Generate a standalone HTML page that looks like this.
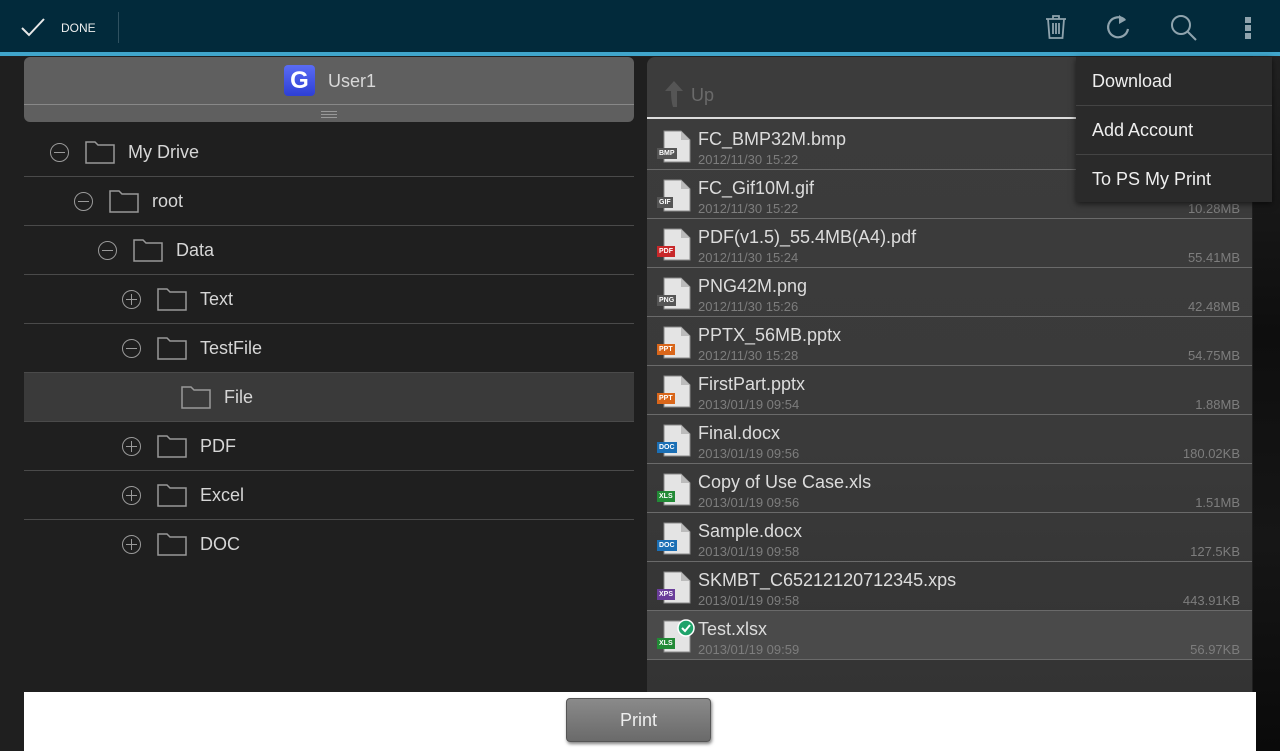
<!DOCTYPE html>
<html><head><meta charset="utf-8"><style>
*{margin:0;padding:0;box-sizing:border-box}
body{width:1280px;height:751px;overflow:hidden;background:#1f1f1f;font-family:"Liberation Sans",sans-serif;position:relative}
.a{position:absolute}
#top{left:0;top:0;width:1280px;height:52px;background:#022a3b}
#line{left:0;top:52px;width:1280px;height:4px;background:#40a6cc}
#rstrip{left:1253px;top:56px;width:27px;height:695px;background:linear-gradient(#222,#0e0e0e 40%,#161616 70%,#0a0a0a)}
.tr{position:absolute;left:24px;width:610px;height:49px;border-bottom:1px solid #4a4a4a;color:#d6d6d6;font-size:18px}
.tr span{position:absolute;top:14px}
.ci{position:absolute;top:15px;width:19px;height:19px;border:1.5px solid #9a9a9a;border-radius:50%}
.ci:before{content:"";position:absolute;left:3px;right:3px;top:7.5px;height:1.5px;background:#9a9a9a}
.ci.p:after{content:"";position:absolute;top:3px;bottom:3px;left:7.5px;width:1.5px;background:#9a9a9a}
.fo{position:absolute;top:12px}
#rp{left:647px;top:57px;width:605px;height:635px;background:linear-gradient(#3c3c3c,#3a3a3a 60%,#333 100%);border-radius:8px 8px 0 0}
.fr{position:absolute;left:0;width:605px;height:49px;border-bottom:1px solid #6a6a6a}
.fr .n{position:absolute;left:51px;top:8px;font-size:18px;color:#dcdcdc}
.fr .d{position:absolute;left:51px;top:31px;font-size:13px;color:#7d7d7d}
.fr .s{position:absolute;right:12px;top:31px;font-size:13px;color:#7d7d7d}
.ic{position:absolute;left:13px;top:9px;width:32px;height:33px}
.bd{position:absolute;left:10px;top:27px;height:11px;padding:0 2px;font-size:7px;font-weight:bold;color:#fff;line-height:11px}
#menu{left:1076px;top:57px;width:196px;height:145px;background:#2a2a2a;box-shadow:0 2px 6px rgba(0,0,0,.6)}
#menu div{height:49px;border-bottom:1px solid #444;color:#eee;font-size:18px;padding:14px 16px}
#menu div:last-child{border:none}
</style></head><body>
<div class="a" id="top"></div>
<div class="a" id="line"></div>
<svg class="a" style="left:20px;top:17px" width="26" height="22"><path d="M2 11 L9 18 L24 2" stroke="#e8e8e8" stroke-width="2" fill="none"/></svg>
<div class="a" style="left:61px;top:21px;color:#eee;font-size:12px">DONE</div>
<div class="a" style="left:118px;top:12px;width:1px;height:31px;background:#2f5160"></div>
<svg class="a" style="left:1043px;top:14px" width="26" height="26" fill="none" stroke="#8fa3ad" stroke-width="1.8"><path d="M3 5H23M10 5V2H16V5M5 5L6.5 24H19.5L21 5M10 9V20M13 9V20M16 9V20"/></svg>
<svg class="a" style="left:1105px;top:13px" width="28" height="28" fill="none" stroke="#8fa3ad" stroke-width="2.2"><path d="M20 7A10 10 0 1 0 23 16"/><path d="M14 2L21 7L14 11Z" fill="#8fa3ad" stroke="none"/></svg>
<svg class="a" style="left:1169px;top:13px" width="30" height="30" fill="none" stroke="#8fa3ad" stroke-width="2"><circle cx="12" cy="12" r="9"/><path d="M18.5 18.5L27 27"/></svg>
<div class="a" style="left:1245px;top:17px;width:6px;height:6px;background:#8fa3ad;box-shadow:0 8px 0 #8fa3ad,0 16px 0 #8fa3ad"></div>
<div class="a" id="rstrip"></div>

<div class="a" style="left:24px;top:57px;width:610px;height:65px;background:#5f5f5f;border-radius:6px">
 <div class="a" style="left:260px;top:8px;width:31px;height:31px;border-radius:4px;background:linear-gradient(#5a6cf5,#2d3fd6);color:#fff;font-weight:bold;font-size:24px;text-align:center;line-height:31px">G</div>
 <div class="a" style="left:304px;top:14px;font-size:18px;color:#d8d8d8">User1</div>
 <div class="a" style="left:0;top:47px;width:610px;height:1px;background:#888"></div>
 <div class="a" style="left:297px;top:54px;width:16px;height:1px;background:#999;box-shadow:0 3px 0 #999,0 6px 0 #999"></div>
</div>

<div class="tr" style="top:128px"><div class="ci" style="left:26px"></div><svg class="fo" style="left:61px" width="30" height="24" fill="none" stroke="#999" stroke-width="1.5"><path d="M1 23V2H10L13 5H29V23Z"/></svg><span style="left:104px">My Drive</span></div>
<div class="tr" style="top:177px"><div class="ci" style="left:50px"></div><svg class="fo" style="left:85px" width="30" height="24" fill="none" stroke="#999" stroke-width="1.5"><path d="M1 23V2H10L13 5H29V23Z"/></svg><span style="left:128px">root</span></div>
<div class="tr" style="top:226px"><div class="ci" style="left:74px"></div><svg class="fo" style="left:109px" width="30" height="24" fill="none" stroke="#999" stroke-width="1.5"><path d="M1 23V2H10L13 5H29V23Z"/></svg><span style="left:152px">Data</span></div>
<div class="tr" style="top:275px"><div class="ci p" style="left:98px"></div><svg class="fo" style="left:133px" width="30" height="24" fill="none" stroke="#999" stroke-width="1.5"><path d="M1 23V2H10L13 5H29V23Z"/></svg><span style="left:176px">Text</span></div>
<div class="tr" style="top:324px"><div class="ci" style="left:98px"></div><svg class="fo" style="left:133px" width="30" height="24" fill="none" stroke="#999" stroke-width="1.5"><path d="M1 23V2H10L13 5H29V23Z"/></svg><span style="left:176px">TestFile</span></div>
<div class="tr" style="top:373px;background:#3a3a3a"><svg class="fo" style="left:157px" width="30" height="24" fill="none" stroke="#999" stroke-width="1.5"><path d="M1 23V2H10L13 5H29V23Z"/></svg><span style="left:200px">File</span></div>
<div class="tr" style="top:422px"><div class="ci p" style="left:98px"></div><svg class="fo" style="left:133px" width="30" height="24" fill="none" stroke="#999" stroke-width="1.5"><path d="M1 23V2H10L13 5H29V23Z"/></svg><span style="left:176px">PDF</span></div>
<div class="tr" style="top:471px"><div class="ci p" style="left:98px"></div><svg class="fo" style="left:133px" width="30" height="24" fill="none" stroke="#999" stroke-width="1.5"><path d="M1 23V2H10L13 5H29V23Z"/></svg><span style="left:176px">Excel</span></div>
<div class="tr" style="top:520px;border:none"><div class="ci p" style="left:98px"></div><svg class="fo" style="left:133px" width="30" height="24" fill="none" stroke="#999" stroke-width="1.5"><path d="M1 23V2H10L13 5H29V23Z"/></svg><span style="left:176px">DOC</span></div>

<div class="a" id="rp">
 <svg class="a" style="left:18px;top:24px" width="18" height="26"><path d="M9 0L18 10H12V26H8Q6 20 6 10H0Z" fill="#555"/></svg>
 <div class="a" style="left:44px;top:28px;font-size:18px;color:#6a6a6a">Up</div>
 <div class="a" style="left:0;top:60px;width:430px;height:2px;background:#ddd"></div>
 <div class="fr" style="top:64px"><svg class="ic" viewBox="0 0 32 33"><path d="M4 1H21L30 10V32H4Z" fill="#e4e4e4" stroke="#888"/><path d="M21 1V10H30" fill="#bbb"/></svg><div class="bd" style="background:#555">BMP</div><div class="n">FC_BMP32M.bmp</div><div class="d">2012/11/30 15:22</div></div>
 <div class="fr" style="top:113px"><svg class="ic" viewBox="0 0 32 33"><path d="M4 1H21L30 10V32H4Z" fill="#e4e4e4" stroke="#888"/><path d="M21 1V10H30" fill="#bbb"/></svg><div class="bd" style="background:#555">GIF</div><div class="n">FC_Gif10M.gif</div><div class="d">2012/11/30 15:22</div><div class="s">10.28MB</div></div>
 <div class="fr" style="top:162px"><svg class="ic" viewBox="0 0 32 33"><path d="M4 1H21L30 10V32H4Z" fill="#e4e4e4" stroke="#888"/><path d="M21 1V10H30" fill="#bbb"/></svg><div class="bd" style="background:#c8282a">PDF</div><div class="n">PDF(v1.5)_55.4MB(A4).pdf</div><div class="d">2012/11/30 15:24</div><div class="s">55.41MB</div></div>
 <div class="fr" style="top:211px"><svg class="ic" viewBox="0 0 32 33"><path d="M4 1H21L30 10V32H4Z" fill="#e4e4e4" stroke="#888"/><path d="M21 1V10H30" fill="#bbb"/></svg><div class="bd" style="background:#555">PNG</div><div class="n">PNG42M.png</div><div class="d">2012/11/30 15:26</div><div class="s">42.48MB</div></div>
 <div class="fr" style="top:260px"><svg class="ic" viewBox="0 0 32 33"><path d="M4 1H21L30 10V32H4Z" fill="#e4e4e4" stroke="#888"/><path d="M21 1V10H30" fill="#bbb"/></svg><div class="bd" style="background:#d9661a">PPT</div><div class="n">PPTX_56MB.pptx</div><div class="d">2012/11/30 15:28</div><div class="s">54.75MB</div></div>
 <div class="fr" style="top:309px"><svg class="ic" viewBox="0 0 32 33"><path d="M4 1H21L30 10V32H4Z" fill="#e4e4e4" stroke="#888"/><path d="M21 1V10H30" fill="#bbb"/></svg><div class="bd" style="background:#d9661a">PPT</div><div class="n">FirstPart.pptx</div><div class="d">2013/01/19 09:54</div><div class="s">1.88MB</div></div>
 <div class="fr" style="top:358px"><svg class="ic" viewBox="0 0 32 33"><path d="M4 1H21L30 10V32H4Z" fill="#e4e4e4" stroke="#888"/><path d="M21 1V10H30" fill="#bbb"/></svg><div class="bd" style="background:#1b6fb5">DOC</div><div class="n">Final.docx</div><div class="d">2013/01/19 09:56</div><div class="s">180.02KB</div></div>
 <div class="fr" style="top:407px"><svg class="ic" viewBox="0 0 32 33"><path d="M4 1H21L30 10V32H4Z" fill="#e4e4e4" stroke="#888"/><path d="M21 1V10H30" fill="#bbb"/></svg><div class="bd" style="background:#228a36">XLS</div><div class="n">Copy of Use Case.xls</div><div class="d">2013/01/19 09:56</div><div class="s">1.51MB</div></div>
 <div class="fr" style="top:456px"><svg class="ic" viewBox="0 0 32 33"><path d="M4 1H21L30 10V32H4Z" fill="#e4e4e4" stroke="#888"/><path d="M21 1V10H30" fill="#bbb"/></svg><div class="bd" style="background:#1b6fb5">DOC</div><div class="n">Sample.docx</div><div class="d">2013/01/19 09:58</div><div class="s">127.5KB</div></div>
 <div class="fr" style="top:505px"><svg class="ic" viewBox="0 0 32 33"><path d="M4 1H21L30 10V32H4Z" fill="#e4e4e4" stroke="#888"/><path d="M21 1V10H30" fill="#bbb"/></svg><div class="bd" style="background:#6a3d9a">XPS</div><div class="n">SKMBT_C65212120712345.xps</div><div class="d">2013/01/19 09:58</div><div class="s">443.91KB</div></div>
 <div class="fr" style="top:554px;background:#4a4a4a"><svg class="ic" viewBox="0 0 32 33"><path d="M4 1H21L30 10V32H4Z" fill="#e4e4e4" stroke="#888"/><path d="M21 1V10H30" fill="#bbb"/></svg><div class="bd" style="background:#228a36">XLS</div><svg class="a" style="left:30px;top:8px" width="18" height="18"><circle cx="9" cy="9" r="8" fill="#1fa36a" stroke="#fff" stroke-width="1.5"/><path d="M5 9L8 12L13 6" stroke="#fff" stroke-width="2" fill="none"/></svg><div class="n">Test.xlsx</div><div class="d">2013/01/19 09:59</div><div class="s">56.97KB</div></div>
</div>

<div class="a" id="menu"><div>Download</div><div>Add Account</div><div>To PS My Print</div></div>

<div class="a" style="left:24px;top:692px;width:1232px;height:59px;background:#fff"></div>
<div class="a" style="left:566px;top:698px;width:145px;height:44px;border-radius:4px;background:linear-gradient(#8a8a8a,#6a6a6a);border:1px solid #555;box-shadow:1px 2px 3px rgba(0,0,0,.5);color:#eee;font-size:18px;text-align:center;line-height:42px">Print</div>
</body></html>
